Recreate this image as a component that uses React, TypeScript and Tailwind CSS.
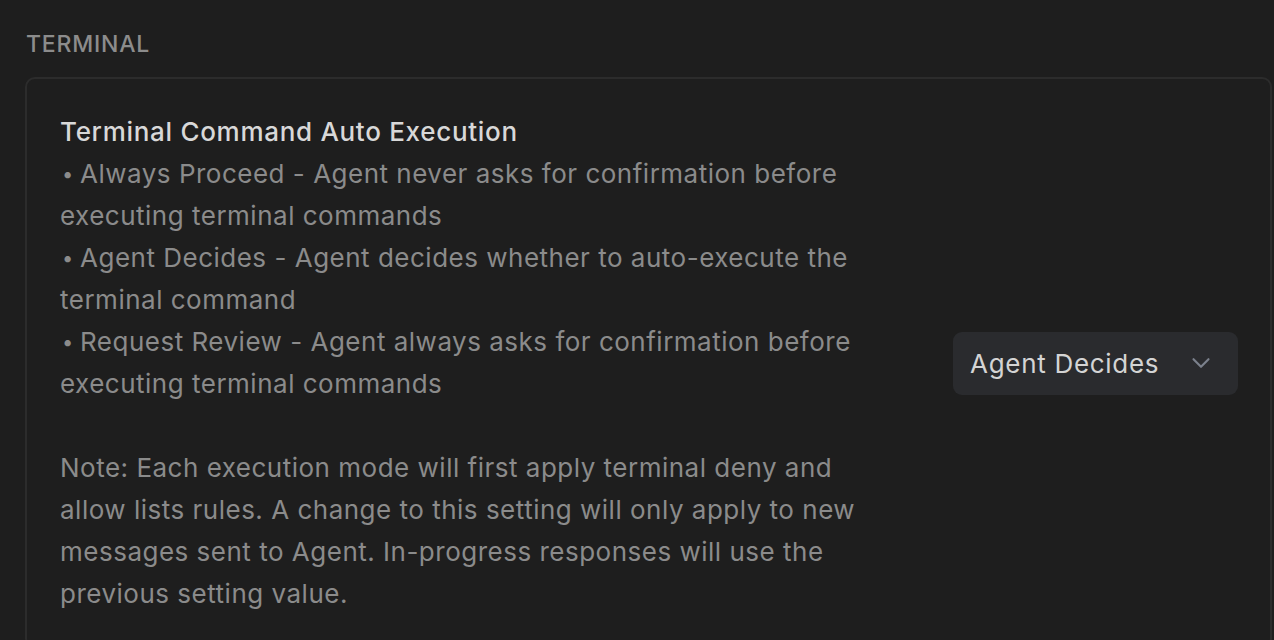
import React from 'react';
import { ChevronDown } from 'lucide-react';

const options = [
  { name: 'Always Proceed', desc: 'Agent never asks for confirmation before executing terminal commands' },
  { name: 'Agent Decides', desc: 'Agent decides whether to auto-execute the terminal command' },
  { name: 'Request Review', desc: 'Agent always asks for confirmation before executing terminal commands' },
];

export default function App() {
  return (
    <div
      className="min-h-screen bg-[#1e1e1e] overflow-hidden pl-[25px] pr-[2px] pt-[30px]"
      style={{ fontFamily: 'Inter, "Noto Sans", sans-serif' }}
    >
      <h2 className="text-[23px] leading-[28px] font-medium tracking-[0.8px] text-[#8c8c8c] pl-px mb-[19px]">
        TERMINAL
      </h2>

      <div className="rounded-[10px] border-2 border-[#2c2c2c] pl-[33px] pr-[32px] py-[32px] flex items-center justify-between">
        <div className="w-[822px] text-[26px] leading-[42px] tracking-[0.5px] text-[#8b8b8b]">
          <div className="font-medium tracking-[0.7px] text-[#d8d8d8]">Terminal Command Auto Execution</div>
          {options.map((o) => (
            <div key={o.name}>
              <span className="inline-block w-[20px] pl-[2px] text-[20px] align-top">•</span>
              {o.name} - {o.desc}
            </div>
          ))}
          <div className="mt-[42px]">
            Note: Each execution mode will first apply terminal deny and allow lists rules. A change to this
            setting will only apply to new messages sent to Agent. In-progress responses will use the previous
            setting value.
          </div>
        </div>

        <button className="w-[285px] h-[63px] rounded-[9px] bg-[#2a2b2e] flex items-center justify-between pl-[17px] pr-[22px] text-[26px] tracking-[0.7px] text-[#d4d4d4]">
          <span>Agent Decides</span>
          <ChevronDown className="w-[30px] h-[30px] text-[#7b818c]" strokeWidth={1.7} />
        </button>
      </div>
    </div>
  );
}
